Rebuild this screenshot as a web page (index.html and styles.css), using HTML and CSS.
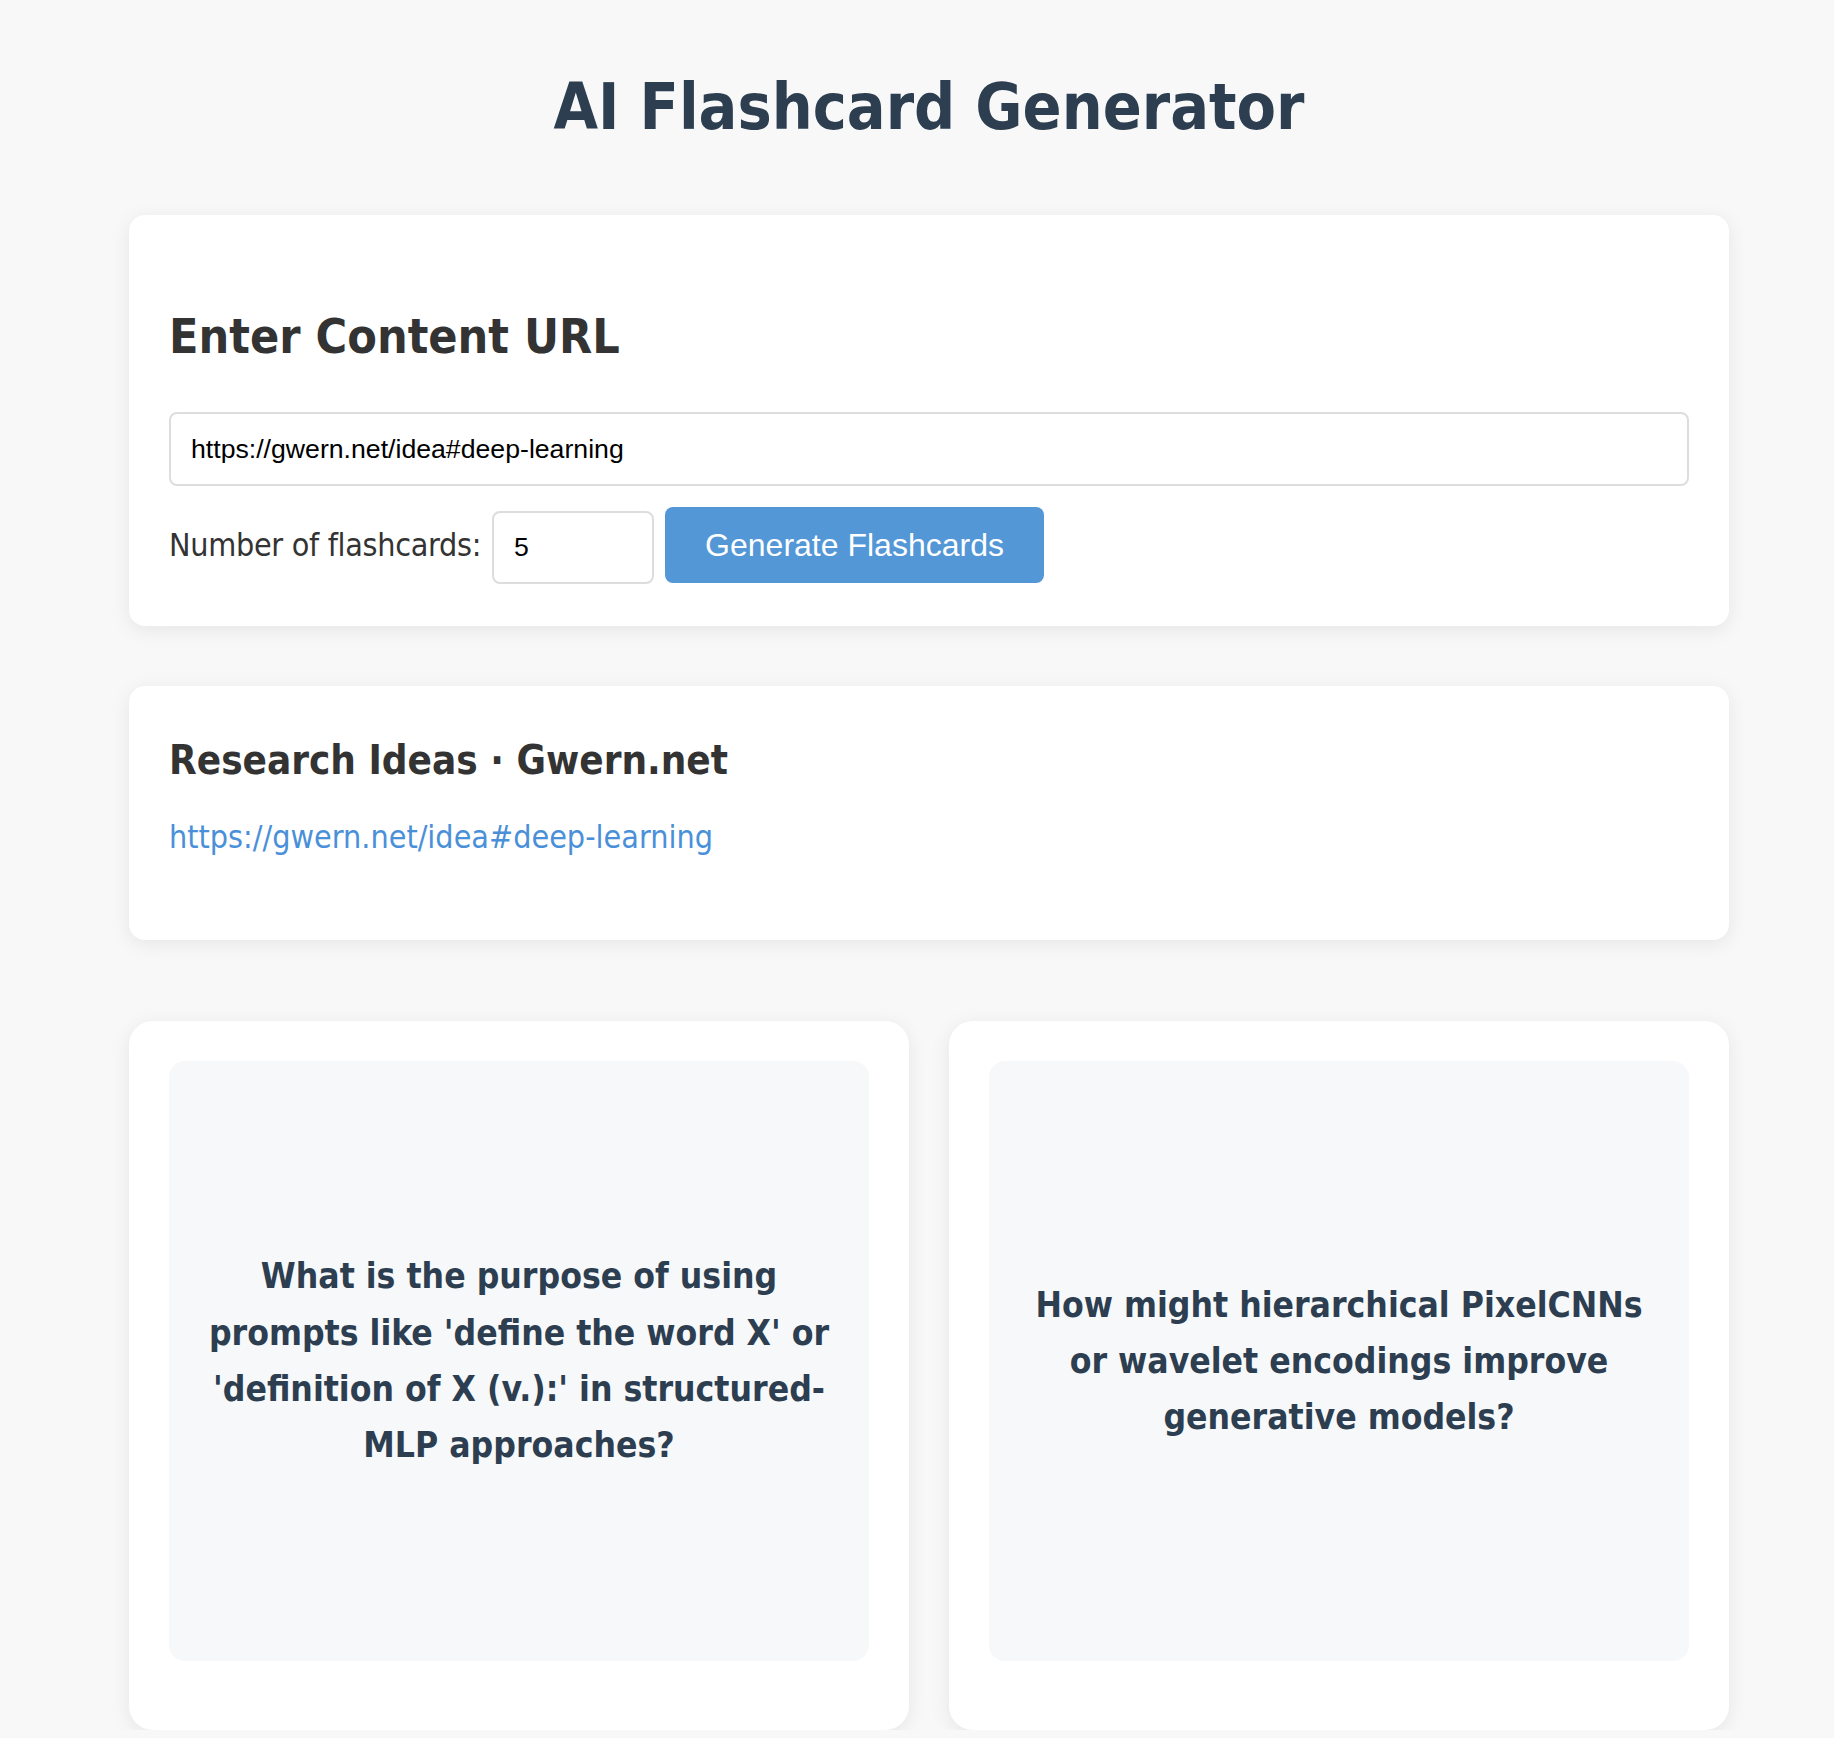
FILE: index.html
```html
<!DOCTYPE html>
<html lang="en">
<head>
<meta charset="utf-8">
<title>AI Flashcard Generator</title>
<link rel="stylesheet" href="styles.css">
</head>
<body>
<div class="container">
  <h1 class="title">AI Flashcard Generator</h1>

  <section class="panel input-panel">
    <h2 class="panel-heading">Enter Content URL</h2>
    <input class="url-input" type="text" value="https://gwern.net/idea#deep-learning">
    <div class="controls">
      <label class="count-label" for="count">Number of flashcards:</label>
      <input class="count-input" id="count" type="number" value="5">
      <button class="generate-btn" type="button">Generate Flashcards</button>
    </div>
  </section>

  <section class="panel source-panel">
    <h3 class="source-title">Research Ideas · Gwern.net</h3>
    <p class="source-link-row"><a class="source-link" href="#">https://gwern.net/idea#deep-learning</a></p>
  </section>

  <div class="cards">
    <div class="flashcard">
      <div class="card-face">
        <p class="question">What is the purpose of using prompts like 'define the word X' or 'definition of X (v.):' in structured-MLP approaches?</p>
      </div>
    </div>
    <div class="flashcard">
      <div class="card-face">
        <p class="question">How might hierarchical PixelCNNs or wavelet encodings improve generative models?</p>
      </div>
    </div>
  </div>
</div>
</body>
</html>
```

FILE: styles.css
```css
html, body {
  margin: 0;
  padding: 0;
}

body {
  background: #f8f8f8;
  font-family: "DejaVu Sans Condensed", "DejaVu Sans", sans-serif;
  font-stretch: condensed;
  color: #333;
  padding-left: 24px;
}

.container {
  width: 1600px;
  margin: 0 auto;
}

.title {
  margin: 68px 0 69px;
  font-size: 64px;
  line-height: 78px;
  font-weight: bold;
  text-align: center;
  color: #2c3e50;
}

.panel {
  background: #fff;
  border-radius: 16px;
  box-shadow: 0 4px 20px rgba(0, 0, 0, 0.08);
  padding: 40px;
}

.panel-heading {
  margin: 52px 0 47px;
  font-size: 48px;
  line-height: 58px;
  font-weight: bold;
  color: #333;
}

.url-input {
  display: block;
  box-sizing: border-box;
  width: 100%;
  height: 74px;
  padding: 0 20px;
  border: 2px solid #ddd;
  border-radius: 8px;
  font-family: "Liberation Sans", Arial, sans-serif;
  font-size: 26.67px;
  color: #000;
  background: #fff;
  outline: none;
}

.controls {
  display: flex;
  align-items: baseline;
  margin-top: 21px;
  margin-bottom: 2px;
}

.count-label {
  font-size: 32px;
  letter-spacing: -0.3px;
  color: #333;
}

.count-input {
  box-sizing: border-box;
  width: 162px;
  height: 73px;
  margin-left: 11px;
  padding: 0 20px;
  border: 2px solid #ddd;
  border-radius: 8px;
  font-family: "Liberation Sans", Arial, sans-serif;
  font-size: 26.67px;
  color: #000;
  background: #fff;
  outline: none;
}

.generate-btn {
  margin-left: 11px;
  padding: 20px 40px;
  border: none;
  border-radius: 8px;
  background: #5397d6;
  color: #fff;
  font-family: "Liberation Sans", Arial, sans-serif;
  font-size: 32px;
  line-height: 36px;
  cursor: pointer;
}

.source-panel {
  margin-top: 60px;
}

.source-title {
  margin: 10px 0 34px;
  font-size: 40px;
  line-height: 48px;
  font-weight: bold;
  color: #333;
}

.source-link-row {
  margin: 0 0 44px;
  font-size: 32px;
  line-height: 38px;
}

.source-link {
  color: #4a90d9;
  text-decoration: none;
}

.cards {
  display: grid;
  grid-template-columns: 1fr 1fr;
  gap: 40px;
  margin-top: 81px;
}

.flashcard {
  background: #fff;
  border-radius: 24px;
  box-shadow: 0 4px 20px rgba(0, 0, 0, 0.08);
  padding: 40px 40px 69px;
}

.card-face {
  height: 600px;
  display: flex;
  align-items: center;
  justify-content: center;
  background: #f7f8fa;
  border-radius: 16px;
  padding: 0 28px;
}

.question {
  margin: 0;
  font-size: 35.2px;
  line-height: 56.3px;
  font-weight: bold;
  text-align: center;
  color: #2c3e50;
}
```
